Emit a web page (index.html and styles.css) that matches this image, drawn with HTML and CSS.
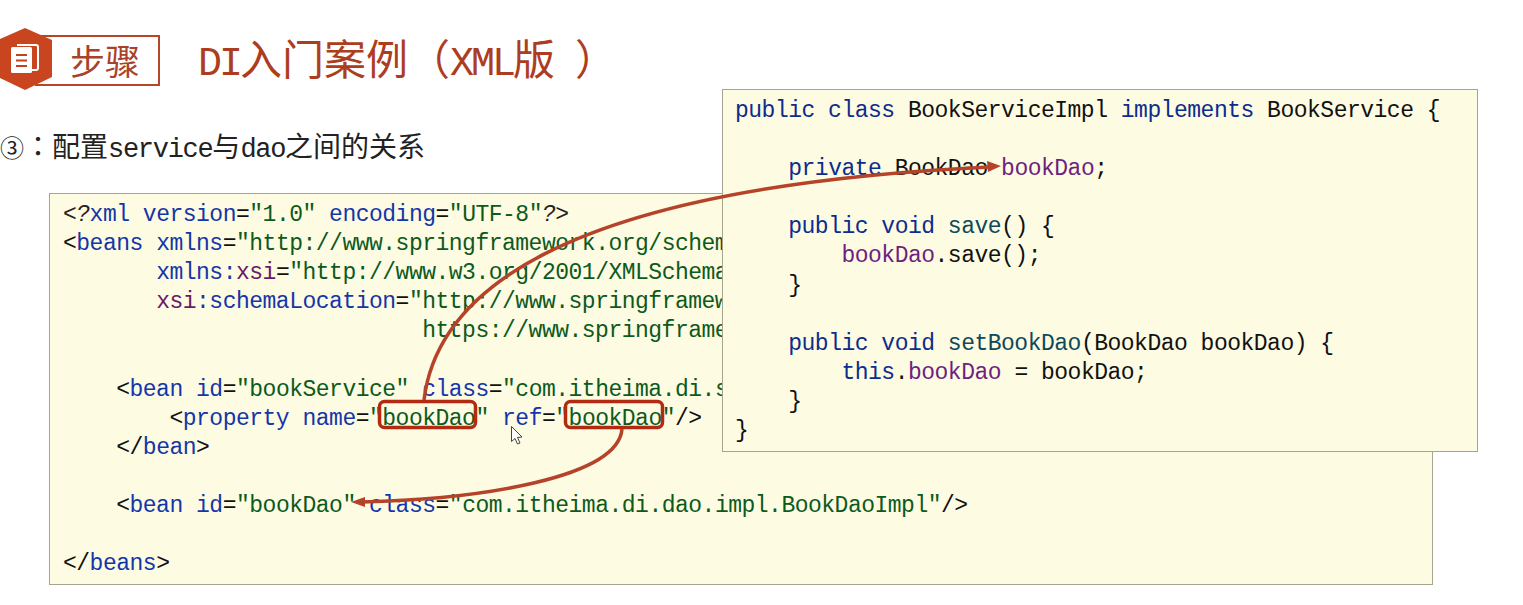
FILE: index.html
```html
<!DOCTYPE html>
<html lang="zh">
<head>
<meta charset="utf-8">
<title>DI入门案例（XML版）</title>
<link rel="stylesheet" href="styles.css">
</head>
<body>
<header class="head">
  <div class="badge">
    <svg class="hex" width="53" height="63" viewBox="0 28 53 63">
      <polygon points="25,28 52,40 52,77 25,90 -2,77 -2,40" fill="#c8451f"/>
      <path d="M17 45h19a2 2 0 0 1 2 2v21a2 2 0 0 1-2 2h-4" fill="none" stroke="#fff" stroke-width="2"/>
      <rect x="11" y="47" width="21" height="26" rx="1.500" fill="#fff"/>
      <path d="M16 55h11M16 60.500h11M16 66h11" stroke="#c0421f" stroke-width="1.800" fill="none"/>
    </svg>
    <div class="step">步骤</div>
  </div>
  <h1 class="title"><span class="title-latin">DI</span>入门案例（<span class="title-latin">XML</span>版<span class="title-close">）</span></h1>
</header>
<p class="sub"><span class="circ">③</span><span class="colon" lang="zh-TW">：</span>配置<span class="sub-latin">service</span>与<span class="sub-latin">dao</span>之间的关系</p>

<pre class="code xml"><span class="p">&lt;?</span><span class="k">xml</span> <span class="k">version</span>=<span class="s">"1.0"</span> <span class="k">encoding</span>=<span class="s">"UTF-8"</span><span class="p">?&gt;</span>
&lt;<span class="k">beans</span> <span class="k">xmlns</span>=<span class="s">"http://www.springframework.org/schema/beans"</span>
       <span class="k">xmlns:</span><span class="m">xsi</span>=<span class="s">"http://www.w3.org/2001/XMLSchema-instance"</span>
       <span class="m">xsi</span><span class="k">:schemaLocation</span>=<span class="s">"http://www.springframework.org/schema/beans</span>
                           <span class="s">https://www.springframework.org/schema/beans/spring-beans.xsd"</span>&gt;

    &lt;<span class="k">bean</span> <span class="k">id</span>=<span class="s">"bookService"</span> <span class="k">class</span>=<span class="s">"com.itheima.di.service.impl.BookServiceImpl"</span>&gt;
        &lt;<span class="k">property</span> <span class="k">name</span>=<span class="s">"bookDao"</span> <span class="k">ref</span>=<span class="s">"bookDao"</span>/&gt;
    &lt;/<span class="k">bean</span>&gt;

    &lt;<span class="k">bean</span> <span class="k">id</span>=<span class="s">"bookDao"</span> <span class="k">class</span>=<span class="s">"com.itheima.di.dao.impl.BookDaoImpl"</span>/&gt;

&lt;/<span class="k">beans</span>&gt;</pre>

<pre class="code java"><span class="j">public class</span> BookServiceImpl <span class="j">implements</span> BookService {

    <span class="j">private</span> BookDao <span class="f">bookDao</span>;

    <span class="j">public void</span> <span class="t">save</span>() {
        <span class="f">bookDao</span>.save();
    }

    <span class="j">public void</span> <span class="t">setBookDao</span>(BookDao bookDao) {
        <span class="j">this</span>.<span class="f">bookDao</span> = bookDao;
    }
}</pre>

<svg class="overlay" width="1523" height="605" viewBox="0 0 1523 605">
  <rect x="379.500" y="401.500" width="96" height="26" rx="5" class="mark"/>
  <rect x="565.500" y="401.500" width="97" height="26" rx="5" class="mark"/>
  <path d="M424 400C436 300 545 188 990 167" class="line"/>
  <polygon points="1001,166 987,161 988,172" class="head-fill"/>
  <path d="M622 429C618 478 480 499 362 502" class="line"/>
  <polygon points="351,502 365,497 365,507" class="head-fill"/>
  <path d="M511.500 426.500v15l3.500-3 2.500 5.500 2.500-1-2.500-5.500 4.500-.5z" fill="#fff" stroke="#444" stroke-width="1"/>
</svg>
</body>
</html>
```
FILE: styles.css
```css
html, body { margin: 0; padding: 0; }
body {
  width: 1523px;
  height: 605px;
  position: relative;
  overflow: hidden;
  background: #fff;
  font-family: "Liberation Mono", "Noto Sans CJK SC", monospace;
}
.head {
  display: flex;
  align-items: center;
  gap: 38px;
  height: 51px;
  padding-top: 35px;
}
.badge {
  display: flex;
  align-items: center;
  position: relative;
  height: 51px;
}
.hex { position: absolute; left: 0; top: -7px; z-index: 1; }
.step {
  box-sizing: border-box;
  width: 125px;
  height: 51px;
  margin-left: 35px;
  padding-left: 33px;
  border: 2px solid #b6452a;
  color: #a8432a;
  font: 400 35px/45px "Noto Sans CJK SC", sans-serif;
  white-space: nowrap;
}
.title {
  margin: 0;
  font: 400 42px/50px "Noto Sans CJK SC", sans-serif;
  color: #ad3d20;
  white-space: nowrap;
}
.title-latin {
  font-family: "Liberation Mono", monospace;
  font-size: 40px;
  letter-spacing: -3px;
}
.title-close { margin-left: 20px; }
.sub {
  margin: 41px 0 0;
  height: 36px;
  font: 400 28px/36px "Noto Sans CJK SC", sans-serif;
  color: #222;
  white-space: nowrap;
}
.circ { font-size: 24px; }
.colon { font-family: "Noto Sans CJK TC", sans-serif; }
.sub-latin {
  font-family: "Liberation Mono", monospace;
  font-size: 27px;
  letter-spacing: -1.300px;
}
.code {
  box-sizing: border-box;
  margin: 0;
  font: 400 23px/29.100px "Liberation Mono", monospace;
  letter-spacing: -.5px;
  color: #111;
  background: #fefbe3;
  border: 1px solid #a5a590;
  overflow: hidden;
}
.xml {
  width: 1384px;
  height: 392px;
  margin: 30px 0 0 49px;
  padding: 7px 0 0 13px;
}
.java {
  position: absolute;
  left: 722px;
  top: 89px;
  width: 756px;
  height: 363px;
  padding: 7px 0 0 12px;
}
.k { color: #1436a8; }
.s { color: #0c5a1c; }
.m { color: #6a1a66; }
.p { color: #222; font-style: italic; }
.j { color: #0c2d8c; }
.f { color: #6e1f80; }
.t { color: #0c4a5c; }
.overlay { position: absolute; left: 0; top: 0; pointer-events: none; }
.mark { fill: none; stroke: #b22a12; stroke-width: 3.500; }
.line { fill: none; stroke: #b5432a; stroke-width: 3.500; }
.head-fill { fill: #b5432a; }
```
